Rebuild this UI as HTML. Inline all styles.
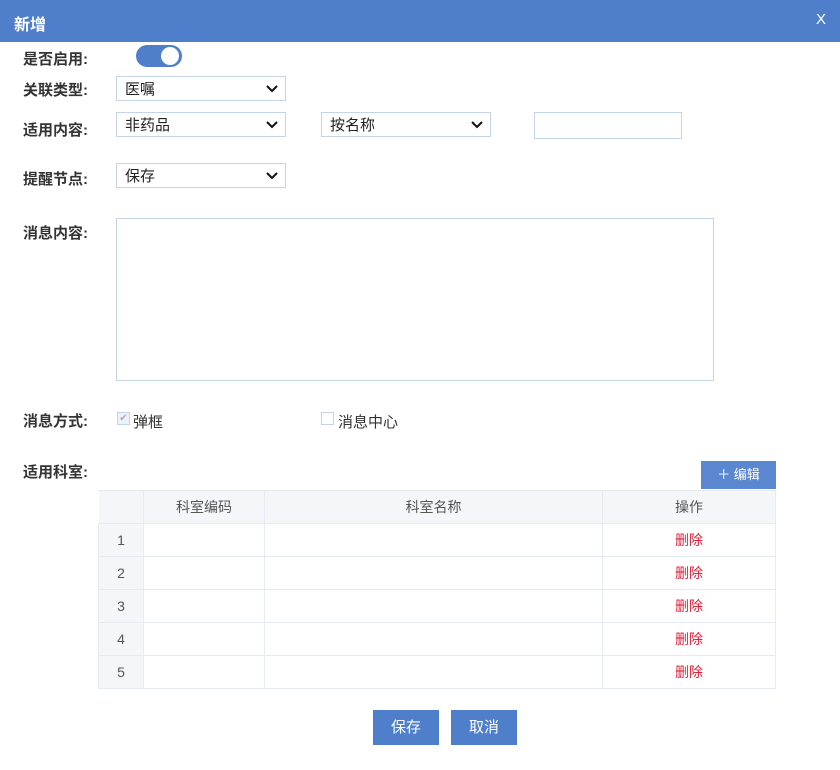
<!DOCTYPE html>
<html><head><meta charset="utf-8"><style>
*{margin:0;padding:0;box-sizing:border-box}
body{width:840px;height:770px;background:#fff;font-family:"Liberation Sans","Noto Sans CJK SC",sans-serif;position:relative;overflow:hidden;color:#222}
.a{position:absolute}
.hdr{left:0;top:0;width:840px;height:42px;background:#4f7fcb;color:#fff}
.lbl{font-size:15px;font-weight:bold;color:#333}
.sel{border:1px solid #c5d3e8;height:25px;font-size:15px;padding-left:8px;line-height:23px;background:#fff}
.sel svg{position:absolute;right:7px;top:8px}
.tb{border-collapse:collapse;font-size:14px;color:#555}
.tb td{border:1px solid #e6eaf2;text-align:center;height:33px}
.btn{background:#4f7fcb;color:#fff;font-size:15px;text-align:center;line-height:35px;height:35px}
</style></head><body>
<div class="a hdr"><span class="a" style="left:14px;top:11px;font-size:16px;font-weight:bold">新增</span><span class="a" style="right:14px;top:11px;font-size:15px">X</span></div>
<div class="a lbl" style="left:23px;top:48px">是否启用:</div>
<div class="a" style="left:136px;top:45px;width:46px;height:22px;border-radius:11px;background:#4f7fcb"><div class="a" style="right:3px;top:2px;width:18px;height:18px;border-radius:50%;background:#fff"></div></div>
<div class="a lbl" style="left:23px;top:79px">关联类型:</div>
<div class="a sel" style="left:116px;top:76px;width:170px;padding-top:1px">医嘱<svg width="12" height="8"><path d="M1 1l5 5 5-5" stroke="#111" stroke-width="2" fill="none"/></svg></div>
<div class="a lbl" style="left:23px;top:119px">适用内容:</div>
<div class="a sel" style="left:116px;top:112px;width:170px;padding-top:1px">非药品<svg width="12" height="8"><path d="M1 1l5 5 5-5" stroke="#111" stroke-width="2" fill="none"/></svg></div>
<div class="a sel" style="left:321px;top:112px;width:170px;padding-top:1px">按名称<svg width="12" height="8"><path d="M1 1l5 5 5-5" stroke="#111" stroke-width="2" fill="none"/></svg></div>
<div class="a sel" style="left:534px;top:112px;width:148px;height:27px"></div>
<div class="a lbl" style="left:23px;top:168px">提醒节点:</div>
<div class="a sel" style="left:116px;top:163px;width:170px;padding-top:1px">保存<svg width="12" height="8"><path d="M1 1l5 5 5-5" stroke="#111" stroke-width="2" fill="none"/></svg></div>
<div class="a lbl" style="left:23px;top:222px">消息内容:</div>
<div class="a" style="left:116px;top:218px;width:598px;height:163px;border:1px solid #c5d3e8"></div>
<div class="a lbl" style="left:23px;top:410px">消息方式:</div>
<div class="a" style="left:117px;top:412px;width:13px;height:13px;border:1px solid #c5d3e8;background:#eef1f7;font-size:10px;color:#aab;line-height:11px;text-align:center">✔</div>
<div class="a" style="left:133px;top:411px;font-size:15px;color:#333">弹框</div>
<div class="a" style="left:321px;top:412px;width:13px;height:13px;border:1px solid #c5d3e8"></div>
<div class="a" style="left:338px;top:411px;font-size:15px;color:#333">消息中心</div>
<div class="a lbl" style="left:23px;top:461px">适用科室:</div>
<div class="a btn" style="left:701px;top:461px;width:75px;height:28px;line-height:28px;font-size:13px;background:#5b87d0">＋ 编辑</div>
<table class="a tb" style="left:98px;top:490px;width:678px">
<tr style="background:#f4f6fa"><td style="width:45px;border-left:none"></td><td style="width:121px">科室编码</td><td style="width:338px">科室名称</td><td>操作</td></tr>
<tr><td style="background:#f4f6fa">1</td><td></td><td></td><td style="color:#e0203a">删除</td></tr>
<tr><td style="background:#f4f6fa">2</td><td></td><td></td><td style="color:#e0203a">删除</td></tr>
<tr><td style="background:#f4f6fa">3</td><td></td><td></td><td style="color:#e0203a">删除</td></tr>
<tr><td style="background:#f4f6fa">4</td><td></td><td></td><td style="color:#e0203a">删除</td></tr>
<tr><td style="background:#f4f6fa;height:32px">5</td><td></td><td></td><td style="color:#e0203a">删除</td></tr>
</table>
<div class="a btn" style="left:373px;top:710px;width:66px">保存</div>
<div class="a btn" style="left:451px;top:710px;width:66px">取消</div>
</body></html>
